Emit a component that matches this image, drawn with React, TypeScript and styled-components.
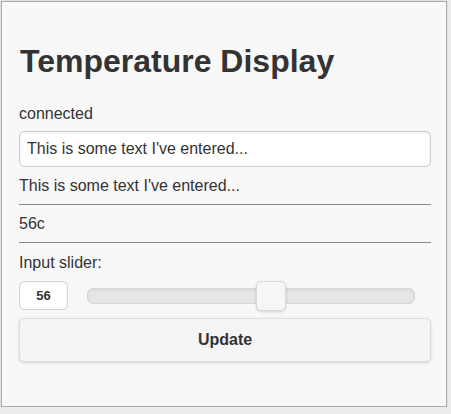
import React, { useState } from "react";
import styled, { createGlobalStyle } from "styled-components";

const Global = createGlobalStyle`
  html, body {
    margin: 0;
    padding: 0;
    background: #ededed;
  }
  body {
    font-family: "Liberation Sans", Arial, Helvetica, sans-serif;
    color: #333;
  }
  * { box-sizing: border-box; }
`;

const Panel = styled.div`
  margin: 1px 0 0 1px;
  width: 446px;
  height: 406px;
  background: #f8f8f8;
  border: 1px solid #aaa;
  box-shadow: 0 0 2px rgba(0, 0, 0, 0.15);
  padding: 0 15px 0 17px;
  display: flex;
  flex-direction: column;
`;

const Title = styled.h1`
  margin: 40px 0 0 1px;
  font-size: 32px;
  line-height: 38px;
  font-weight: bold;
  color: #333;
`;

const Text = styled.div<{ $top: number }>`
  margin-top: ${(p) => p.$top}px;
  font-size: 16px;
  line-height: 20px;
  color: #333;
`;

const TextInput = styled.input`
  margin-top: 7px;
  width: 100%;
  height: 36px;
  padding: 0 7px;
  font-family: inherit;
  font-size: 16px;
  color: #333;
  background: #fff;
  border: 1px solid #ccc;
  border-radius: 5px;
  box-shadow: inset 0 1px 3px rgba(0, 0, 0, 0.08);
  outline: none;
`;

const Rule = styled.hr<{ $top: number }>`
  margin: ${(p) => p.$top}px 0 0;
  border: 0;
  border-top: 1px solid #8a8a8a;
  height: 0;
`;

const SliderRow = styled.div`
  margin-top: 8px;
  height: 29px;
  display: flex;
  align-items: center;
`;

const NumberBox = styled.input`
  width: 49px;
  height: 29px;
  padding: 0;
  text-align: center;
  font-family: inherit;
  font-size: 13px;
  font-weight: bold;
  color: #333;
  background: #fff;
  border: 1px solid #d4d4d4;
  border-radius: 5px;
  box-shadow: inset 0 1px 3px rgba(0, 0, 0, 0.06);
  outline: none;
`;

const Track = styled.div`
  position: relative;
  margin-left: 19px;
  width: 328px;
  height: 16px;
  background: #e6e6e6;
  border: 1px solid #d6d6d6;
  border-radius: 6px;
  box-shadow: inset 0 1px 3px rgba(0, 0, 0, 0.08);
`;

const Thumb = styled.div`
  position: absolute;
  top: -8px;
  width: 30px;
  height: 30px;
  background: #f6f6f6;
  border: 1px solid #d8d8d8;
  border-radius: 5px;
  box-shadow: 0 1px 3px rgba(0, 0, 0, 0.15);
`;

const Button = styled.button`
  margin-top: 8px;
  width: 100%;
  height: 44px;
  font-family: inherit;
  font-size: 16px;
  font-weight: bold;
  color: #333;
  background: #f5f5f5;
  border: 1px solid #ddd;
  border-radius: 5px;
  box-shadow: 0 1px 3px rgba(0, 0, 0, 0.15);
  cursor: pointer;
`;

export default function App() {
  const [text, setText] = useState("This is some text I've entered...");
  const value = 56;
  const min = 0;
  const max = 100;
  const thumbLeft = ((value - min) / (max - min)) * 300;
  return (
    <>
      <Global />
      <Panel>
        <Title>Temperature Display</Title>
        <Text $top={24}>connected</Text>
        <TextInput value={text} onChange={(e) => setText(e.target.value)} />
        <Text $top={9}>{text}</Text>
        <Rule $top={8} />
        <Text $top={9}>{value}c</Text>
        <Rule $top={8} />
        <Text $top={10}>Input slider:</Text>
        <SliderRow>
          <NumberBox value={value} readOnly />
          <Track>
            <Thumb style={{ left: `${thumbLeft}px` }} />
          </Track>
        </SliderRow>
        <Button>Update</Button>
      </Panel>
    </>
  );
}
